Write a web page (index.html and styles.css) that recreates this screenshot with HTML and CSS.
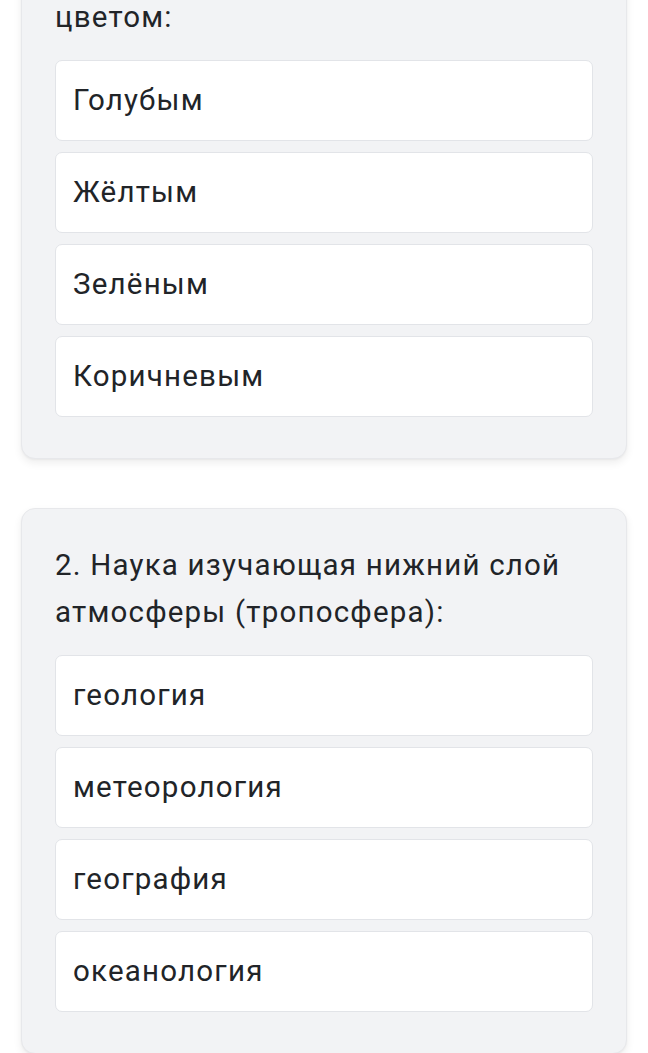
FILE: index.html
```html
<!DOCTYPE html>
<html lang="ru">
<head>
<meta charset="utf-8">
<title>Тест</title>
<link rel="stylesheet" href="styles.css">
</head>
<body>
<main class="quiz">
  <section class="card card-first">
    <p class="question">цветом:</p>
    <ul class="options">
      <li class="option">Голубым</li>
      <li class="option">Жёлтым</li>
      <li class="option">Зелёным</li>
      <li class="option">Коричневым</li>
    </ul>
  </section>
  <section class="card">
    <p class="question">2. Наука изучающая нижний слой атмосферы (тропосфера):</p>
    <ul class="options">
      <li class="option">геология</li>
      <li class="option">метеорология</li>
      <li class="option">география</li>
      <li class="option">океанология</li>
    </ul>
  </section>
</main>
</body>
</html>
```
FILE: styles.css
```css
html, body {
  margin: 0;
  padding: 0;
  background: #ffffff;
}

body {
  font-family: Roboto, "Noto Sans", "DejaVu Sans", sans-serif;
  color: #212428;
  font-size: 29.5px;
  letter-spacing: 1.2px;
  line-height: 47px;
}

.quiz {
  display: flex;
  flex-direction: column;
  gap: 49px;
  padding: 0 21px 40px;
}

.card {
  background: #f2f3f5;
  border: 1px solid #e7e8eb;
  border-radius: 14px;
  padding: 33px 33px 41px;
  box-shadow: 0 4px 8px rgba(0, 0, 0, 0.07), 0 1px 2px rgba(0, 0, 0, 0.04);
}

.card-first {
  margin-top: -60px;
  border-top-left-radius: 0;
  border-top-right-radius: 0;
  padding-top: 53px;
}

.question {
  margin: 0 0 19px;
}

.options {
  list-style: none;
  margin: 0;
  padding: 0;
  display: flex;
  flex-direction: column;
  gap: 11px;
}

.option {
  background: #ffffff;
  border: 1px solid #e2e4e8;
  border-radius: 7px;
  height: 79px;
  display: flex;
  align-items: center;
  padding: 0 17px;
}
```
